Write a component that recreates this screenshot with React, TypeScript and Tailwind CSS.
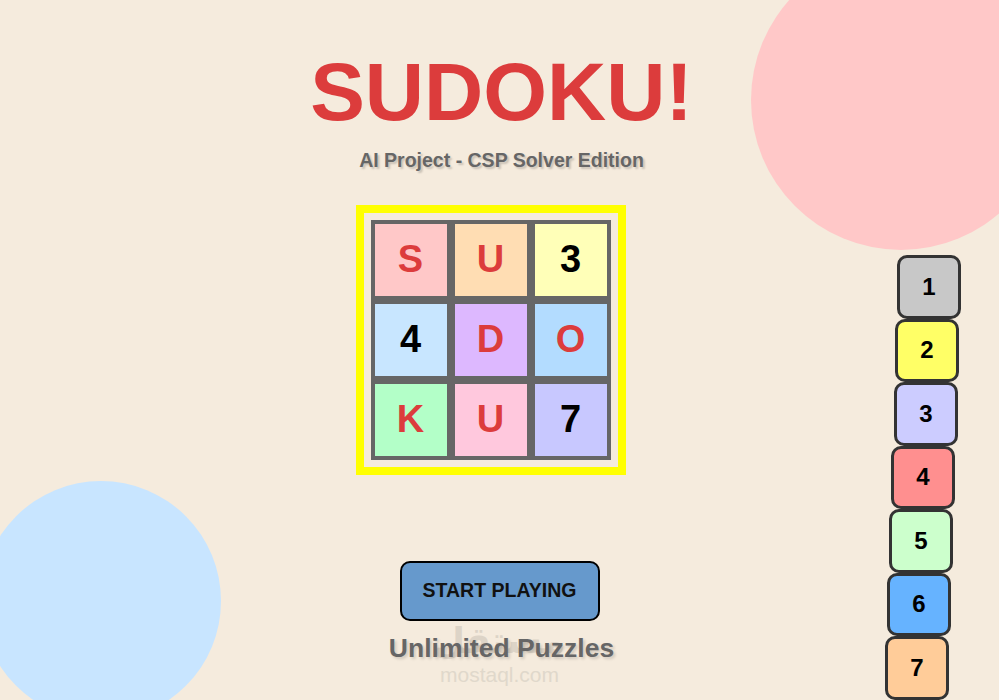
import React from 'react';

const cells = [
  { ch: 'S', bg: 'bg-[#ffc8c8]', fg: 'text-[#dc3c3c]' },
  { ch: 'U', bg: 'bg-[#ffddb3]', fg: 'text-[#dc3c3c]' },
  { ch: '3', bg: 'bg-[#ffffb8]', fg: 'text-black' },
  { ch: '4', bg: 'bg-[#c8e6ff]', fg: 'text-black' },
  { ch: 'D', bg: 'bg-[#ddb8ff]', fg: 'text-[#dc3c3c]' },
  { ch: 'O', bg: 'bg-[#b3dcff]', fg: 'text-[#dc3c3c]' },
  { ch: 'K', bg: 'bg-[#b3ffc8]', fg: 'text-[#dc3c3c]' },
  { ch: 'U', bg: 'bg-[#ffc8dd]', fg: 'text-[#dc3c3c]' },
  { ch: '7', bg: 'bg-[#c8c8ff]', fg: 'text-black' },
];

const tiles = [
  { n: 1, bg: 'bg-[#c8c8c8]', ml: 'ml-[12px]' },
  { n: 2, bg: 'bg-[#ffff66]', ml: 'ml-[10px]' },
  { n: 3, bg: 'bg-[#ccccff]', ml: 'ml-[9px]' },
  { n: 4, bg: 'bg-[#ff8f8f]', ml: 'ml-[6px]' },
  { n: 5, bg: 'bg-[#ccffcc]', ml: 'ml-[4px]' },
  { n: 6, bg: 'bg-[#66b3ff]', ml: 'ml-[2px]' },
  { n: 7, bg: 'bg-[#ffcc99]', ml: 'ml-0' },
];

const App: React.FC = () => {
  return (
    <div className="relative h-[700px] w-full overflow-hidden bg-[#f5ebdd] font-['Liberation_Sans',Arial,sans-serif]">
      {/* background blobs */}
      <div className="absolute left-[751px] top-[-50px] h-[300px] w-[300px] rounded-full bg-[#ffc8c8]" />
      <div className="absolute left-[-19px] top-[481px] h-[240px] w-[240px] rounded-full bg-[#c8e5ff]" />

      <div className="relative flex flex-col items-center">
        <h1 className="ml-[4px] mt-[51px] text-[82px] font-bold leading-none text-[#dc3c3c]">SUDOKU!</h1>
        <p className="ml-[4px] mt-[18px] text-[19.5px] font-bold leading-none text-[#666666] [text-shadow:2px_2px_2px_rgba(0,0,0,0.18)]">
          AI Project - CSP Solver Edition
        </p>

        <div className="mr-[18px] mt-[34px] border-[8px] border-[#ffff00] p-[7px]">
          <div className="grid grid-cols-3 gap-2 bg-[#666666] p-1">
            {cells.map((c, i) => (
              <div
                key={i}
                className={`flex h-[72px] w-[72px] items-center justify-center text-[38px] font-bold ${c.bg} ${c.fg}`}
              >
                {c.ch}
              </div>
            ))}
          </div>
        </div>

        <button className="mt-[86px] h-[60px] w-[200px] rounded-[10px] border-2 border-black bg-[#6699cc] text-[19.5px] font-bold text-[#111]">
          START PLAYING
        </button>

        <div className="relative mt-[14px] flex flex-col items-center">
          <span className="absolute top-[-12px] font-['DejaVu_Sans',sans-serif] text-[36px] font-bold leading-none text-[#ddd4c7]">
            مستقل
          </span>
          <p className="relative ml-[4px] text-[26.5px] font-bold leading-none text-[#666666] [text-shadow:2px_2px_3px_rgba(0,0,0,0.15)]">
            Unlimited Puzzles
          </p>
          <span className="mt-[3px] text-[21px] leading-none text-[#e0d8cb]">mostaql.com</span>
        </div>
      </div>

      {/* falling number tiles */}
      <div className="absolute left-[885px] top-[255px] flex flex-col">
        {tiles.map((t) => (
          <div
            key={t.n}
            className={`flex h-[63.5px] w-[64px] items-center justify-center rounded-[10px] border-[3px] border-[#333333] text-[24px] font-bold text-black ${t.bg} ${t.ml}`}
          >
            {t.n}
          </div>
        ))}
      </div>
    </div>
  );
};

export default App;
